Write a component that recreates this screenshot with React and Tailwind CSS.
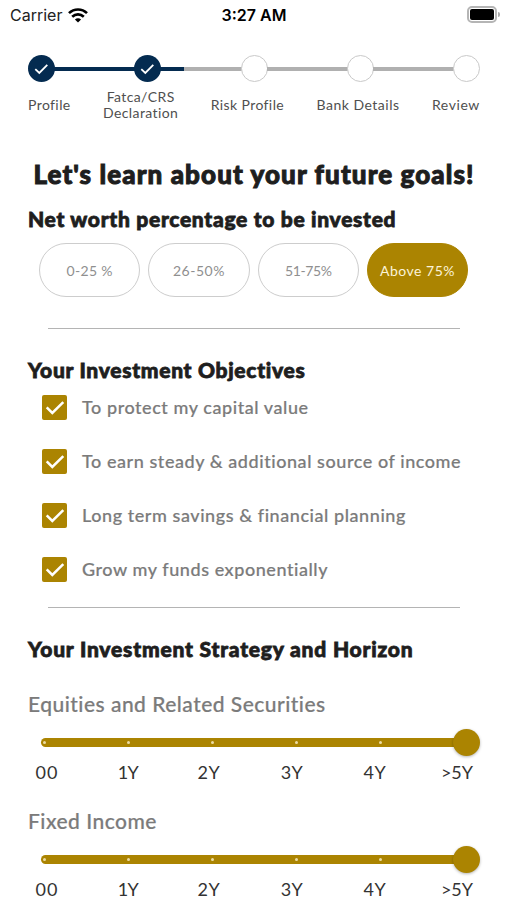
const STEPS = [
  { label: "Profile", done: true, track: "tracking-[0.4px]" },
  { label: "Fatca/CRS\nDeclaration", done: true, track: "tracking-[0.4px]" },
  { label: "Risk Profile", done: false, track: "tracking-[0.4px]" },
  { label: "Bank Details", done: false, track: "tracking-[0.5px]" },
  { label: "Review", done: false, track: "tracking-[0.6px]" },
];

const CONNECTORS = ["w-full", "w-[24px]", "w-0", "w-0"];

const RANGES = [
  { label: "0-25 %", track: "tracking-[0.35px]" },
  { label: "26-50%", track: "tracking-[0.5px]" },
  { label: "51-75%", track: "tracking-[-0.4px]" },
  { label: "Above 75%", track: "tracking-[0.5px]", active: true },
];

const OBJECTIVES = [
  "To protect my capital value",
  "To earn steady & additional source of income",
  "Long term savings & financial planning",
  "Grow my funds exponentially",
];

const TICKS = [
  { label: "00", cls: "w-[23px] tracking-[1px]" },
  { label: "1Y", cls: "w-[18px] justify-center tracking-[-0.6px]" },
  { label: "2Y", cls: "w-[23px] justify-center tracking-[0.6px]" },
  { label: "3Y", cls: "w-[22px] justify-center tracking-[0.5px]" },
  { label: "4Y", cls: "w-[23px] justify-center tracking-[0.6px]" },
  { label: ">5Y", cls: "-ml-[6px] w-[32px] justify-end tracking-normal" },
];

function StatusBar() {
  return (
    <header className="grid h-[30px] grid-cols-3 items-center pl-[10px] pr-[7px] font-['Inter',sans-serif] text-[16px] leading-none text-black">
      <div className="flex items-center gap-[6px]">
        <span className="text-[#222]">Carrier</span>
        <svg width="20" height="15" viewBox="0 0 20 15" fill="none" stroke="#000" strokeWidth="2.6">
          <path d="M1 5.2C6 .2 14 .2 19 5.2" />
          <path d="M4.2 8.8c3.4-3.3 8.200-3.300 11.600 0" />
          <path d="M10 14.600 6.900 11.500c1.700-1.600 4.500-1.600 6.200 0z" fill="#000" stroke="none" />
        </svg>
      </div>
      <span className="-ml-[2px] text-center font-semibold">3:27 AM</span>
      <div className="flex items-center justify-end gap-px pb-[2px]">
        <div className="h-[17px] w-[30px] rounded-[5px] border-2 border-[#b5b5b5] p-px">
          <div className="h-full w-full rounded-[2px] bg-black" />
        </div>
        <div className="h-[5px] w-[2px] rounded-r-full bg-[#aaa]" />
      </div>
    </header>
  );
}

function Step({ done }) {
  if (!done) {
    return <div className="h-[27px] w-[27px] shrink-0 rounded-full border border-[#c9c9c9] bg-white" />;
  }
  return (
    <div className="flex h-[27px] w-[27px] shrink-0 items-center justify-center rounded-full bg-[#042b50]">
      <svg width="15" height="12" viewBox="0 0 15 12" fill="none" stroke="#fff" strokeWidth="1.800">
        <path d="M1.300 6.200 5.300 10 13.300 1.800" />
      </svg>
    </div>
  );
}

function Stepper() {
  return (
    <nav className="ml-7 mr-[27px] mt-[25px]">
      <div className="flex items-center">
        {STEPS.map((s, i) => (
          <div key={s.label} className={i ? "flex flex-1 items-center" : "flex items-center"}>
            {i > 0 && (
              <div className="-mx-px h-1 flex-1 bg-[#b0b0b0]">
                <div className={`h-full bg-[#042b50] ${CONNECTORS[i - 1]}`} />
              </div>
            )}
            <Step done={s.done} />
          </div>
        ))}
      </div>
      <div className="mt-[7px] flex h-[31px] items-center justify-between text-center text-[14px] leading-[16px] text-[#4f4f4f]">
        {STEPS.map((s) => (
          <span key={s.label} className={`whitespace-pre ${s.track}`}>{s.label}</span>
        ))}
      </div>
    </nav>
  );
}

function Heading({ children, track }) {
  return (
    <h2 className={`ml-7 h-6 whitespace-nowrap text-[21px] font-black leading-6 text-[#1e1e1e] [-webkit-text-stroke:0.8px_#1e1e1e] ${track}`}>
      {children}
    </h2>
  );
}

function Divider() {
  return <hr className="ml-12 mr-[47px] h-px border-0 bg-[#b4b4b4]" />;
}

function Horizon({ title }) {
  return (
    <section className="h-[117px]">
      <h3 className="ml-7 h-6 whitespace-nowrap text-[21px] font-medium leading-6 tracking-[0.48px] text-[#7b7b7b] [-webkit-text-stroke:0.2px_#7b7b7b]">{title}</h3>
      <div className="ml-[41px] mr-[27px] mt-[13px] flex h-[27px] items-center">
        <div className="flex h-[8.5px] flex-1 items-center rounded-l-full bg-[#ab8401] pl-[2px]">
          {[0, 1, 2, 3, 4].map((n) => (
            <span key={n} className="w-[84px]">
              <span className="block h-[3px] w-[3px] rounded-full bg-[#ecdca4]" />
            </span>
          ))}
        </div>
        <div className="-ml-[10px] h-[27px] w-[27px] shrink-0 rounded-full bg-[#ab8401] shadow-[0_1px_3px_rgba(0,0,0,0.3)]" />
      </div>
      <div className="ml-[35.5px] mt-[4px] flex gap-[60.5px] text-[18px] leading-6 text-[#333]">
        {TICKS.map((t) => (
          <span key={t.label} className={`flex shrink-0 whitespace-nowrap ${t.cls}`}>{t.label}</span>
        ))}
      </div>
    </section>
  );
}

export default function App() {
  return (
    <main className="h-[900px] w-[507px] overflow-hidden bg-white font-['Lato',sans-serif]">
      <StatusBar />
      <Stepper />
      <h1 className="mt-[38px] h-8 whitespace-nowrap pl-px text-center text-[26px] font-black leading-8 tracking-[1.1px] text-[#1e1e1e] [-webkit-text-stroke:1px_#1e1e1e]">
        Let's learn about your future goals!
      </h1>
      <div className="h-[17px]" />
      <Heading track="tracking-[0.7px]">Net worth percentage to be invested</Heading>
      <div className="ml-[39px] mt-[12px] flex gap-2">
        {RANGES.map((r) => (
          <button
            key={r.label}
            className={`flex h-[54px] w-[101.3px] items-center justify-center whitespace-nowrap rounded-full border text-[14px] ${r.track} ${
              r.active ? "border-[#ab8401] bg-[#ab8401] text-[#fbf3d8]" : "border-[#cdcdcd] bg-white text-[#8f8f8f]"
            }`}
          >
            {r.label}
          </button>
        ))}
      </div>
      <div className="h-[31px]" />
      <Divider />
      <div className="h-[29px]" />
      <Heading track="tracking-[0.7px]">Your Investment Objectives</Heading>
      <ul className="ml-[42px] mt-[13px] flex flex-col gap-[29px]">
        {OBJECTIVES.map((o) => (
          <li key={o} className="flex h-[25px] items-center gap-[15px]">
            <span className="flex h-[25px] w-[25px] items-center justify-center rounded-[2px] bg-[#ab8401]">
              <svg width="20" height="16" viewBox="0 0 20 16" fill="none" stroke="#fff" strokeWidth="2.500">
                <path d="M1.700 7.400 7.300 12.900 18.300 2.100" />
              </svg>
            </span>
            <span className="-mt-[2px] whitespace-nowrap text-[18px] font-medium leading-6 tracking-[0.56px] text-[#7b7b7b] [-webkit-text-stroke:0.2px_#7b7b7b]">{o}</span>
          </li>
        ))}
      </ul>
      <div className="h-[25px]" />
      <Divider />
      <div className="h-[29px]" />
      <Heading track="tracking-[0.8px]">Your Investment Strategy and Horizon</Heading>
      <div className="h-[31px]" />
      <Horizon title="Equities and Related Securities" />
      <Horizon title="Fixed Income" />
    </main>
  );
}
